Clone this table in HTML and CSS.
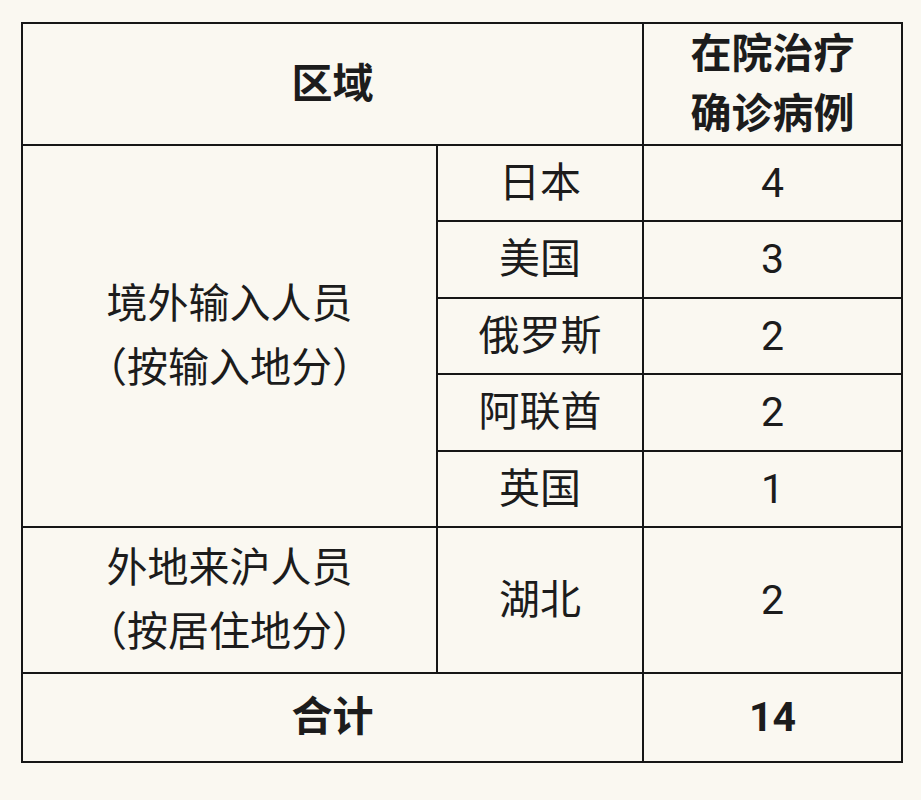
FILE: index.html
```html
<!DOCTYPE html>
<html lang="zh">
<head>
<meta charset="utf-8">
<link rel="stylesheet" href="styles.css">
</head>
<body>
<div class="table">
  <div class="cell head span2">区域</div>
  <div class="cell head two">在院治疗<br>确诊病例</div>
  <div class="cell group g1">境外输入人员<br>（按输入地分）</div>
  <div class="cell">日本</div>
  <div class="cell num">4</div>
  <div class="cell">美国</div>
  <div class="cell num">3</div>
  <div class="cell">俄罗斯</div>
  <div class="cell num">2</div>
  <div class="cell">阿联酋</div>
  <div class="cell num">2</div>
  <div class="cell">英国</div>
  <div class="cell num">1</div>
  <div class="cell group">外地来沪人员<br>（按居住地分）</div>
  <div class="cell">湖北</div>
  <div class="cell num">2</div>
  <div class="cell head span2">合计</div>
  <div class="cell head num">14</div>
</div>
</body>
</html>
```
FILE: styles.css
```css
html, body {
  margin: 0;
  padding: 0;
  background: #faf8f1;
}
body {
  font-family: "Roboto", "Noto Sans CJK SC", sans-serif;
  color: #1c1c1c;
}
.table {
  margin: 22px 0 0 21px;
  width: 882px;
  box-sizing: border-box;
  display: grid;
  grid-template-columns: 413px 204px 257px;
  grid-template-rows: 120px 74px 75px 74px 75px 74px 144px 87px;
  gap: 2px;
  padding: 2px;
  background: #161616;
}
.cell {
  background: #faf8f1;
  display: flex;
  align-items: center;
  justify-content: center;
  text-align: center;
  font-size: 41px;
  line-height: 1;
}
.head {
  font-weight: 700;
}
.span2 {
  grid-column: span 2;
}
.two {
  line-height: 60px;
}
.group {
  line-height: 64px;
}
.g1 {
  grid-row: span 5;
}
.num {
  font-family: "Roboto", sans-serif;
}
```
